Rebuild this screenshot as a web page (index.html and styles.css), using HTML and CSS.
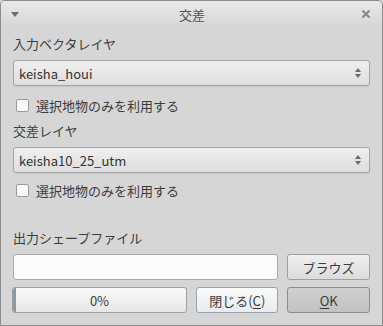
FILE: index.html
```html
<!DOCTYPE html>
<html lang="ja">
<head>
  <meta charset="UTF-8">
  <title>交差</title>
  <link rel="stylesheet" href="styles.css">
</head>
<body>
<div class="window">
  <div class="titlebar">
    <span class="menu-arrow"></span>
    <span class="title">交差</span>
    <svg class="close" width="10" height="10" viewBox="0 0 10 10"><path d="M1.5 1.5 L8.5 8.5 M8.5 1.5 L1.5 8.5" stroke="#8a8a8a" stroke-width="2.2"/></svg>
  </div>

  <div class="content">
    <div class="label first">入力ベクタレイヤ</div>
    <div class="combo"><span>keisha_houi</span><span class="spin"></span></div>
    <label class="check c1"><span class="box"></span>選択地物のみを利用する</label>

    <div class="label">交差レイヤ</div>
    <div class="combo"><span>keisha10_25_utm</span><span class="spin"></span></div>
    <label class="check"><span class="box"></span>選択地物のみを利用する</label>

    <div class="label out">出力シェープファイル</div>
    <div class="row">
      <div class="input"></div>
      <div class="btn">ブラウズ</div>
    </div>
    <div class="row">
      <div class="progress"><span class="chunk"></span>0%</div>
      <div class="btn close-btn">閉じる(<u>C</u>)</div>
      <div class="btn ok"><u>O</u>K</div>
    </div>
  </div>
</div>
</body>
</html>
```

FILE: styles.css
```css
* {
  box-sizing: border-box;
  margin: 0;
  padding: 0;
}

body {
  width: 383px;
  height: 326px;
  font-family: "Noto Sans CJK JP", "Noto Sans", sans-serif;
  font-size: 13px;
  color: #3c3c3c;
  background: #d6d6d6;
}

.window {
  width: 383px;
  height: 326px;
  border: 1px solid #8c8c8c;
  border-radius: 5px 5px 0 0;
  background: #d6d6d6;
  display: flex;
  flex-direction: column;
}

/* Pasek tytułu */
.titlebar {
  height: 26px;
  flex: none;
  display: flex;
  align-items: center;
  padding: 0 11px 0 10px;
  border-radius: 4px 4px 0 0;
  background: linear-gradient(#e9e9e9, #d6d6d6);
}

.menu-arrow {
  width: 0;
  height: 0;
  border-left: 4px solid transparent;
  border-right: 4px solid transparent;
  border-top: 5px solid #6e6e6e;
}

.title {
  flex: 1;
  text-align: center;
  font-size: 13px;
  color: #505050;
  padding-left: 4px;
}

.content {
  padding: 0 12px;
  display: flex;
  flex-direction: column;
}

.label {
  height: 20px;
  line-height: 20px;
  margin-top: 6px;
}

.label.first { margin-top: 7px; }
.label.out { margin-top: 28px; }

.combo {
  margin-top: 6px;
  height: 26px;
  border: 1px solid #a5a5a5;
  border-radius: 3px;
  background: linear-gradient(#efefef, #dedede);
  box-shadow: 0 1px 1px rgba(0,0,0,0.08);
  display: flex;
  align-items: center;
  justify-content: space-between;
  padding: 0 8px 0 5px;
  color: #333;
}

.spin {
  position: relative;
  width: 6px;
  height: 12px;
}

.spin::before, .spin::after {
  content: "";
  position: absolute;
  left: 0;
  border-left: 3px solid transparent;
  border-right: 3px solid transparent;
}

.spin::before { top: 1px; border-bottom: 4px solid #6a6a6a; }
.spin::after { bottom: 1px; border-top: 4px solid #6a6a6a; }

.check {
  display: flex;
  align-items: center;
  height: 20px;
  margin-top: 7px;
  padding-left: 3px;
}

.check.c1 { margin-top: 9px; }

.box {
  flex: none;
  width: 13px;
  height: 13px;
  border: 1px solid #9a9a9a;
  border-radius: 2px;
  background: #fbfbfb;
  margin-right: 7px;
}

.row {
  display: flex;
  gap: 9px;
  margin-top: 6px;
  height: 26px;
}

.row + .row { margin-top: 7px; }

.input {
  flex: 1;
  border: 1px solid #a8a8a8;
  border-radius: 3px;
  background: #fbfbfb;
}

.btn {
  width: 83px;
  border: 1px solid #a0a0a0;
  border-radius: 3px;
  background: linear-gradient(#f0f0f0, #dcdcdc);
  display: flex;
  align-items: center;
  justify-content: center;
  color: #3a3a3a;
}

.close-btn {
  background: linear-gradient(#fafafa, #e8ecf0);
  border-color: #9aa3ad;
}

.ok {
  background: linear-gradient(#d0d0d0, #c2c2c2);
  border-color: #8e8e8e;
}

u { text-decoration-thickness: 1px; text-underline-offset: 2px; }

.progress {
  width: 176px;
  border: 1px solid #a0a0a0;
  border-radius: 3px;
  background: linear-gradient(#fafafa, #e6e6e6);
  display: flex;
  align-items: center;
  justify-content: center;
  position: relative;
  margin-left: -1px;
}

.chunk {
  position: absolute;
  left: 0;
  top: 0;
  bottom: 0;
  width: 3px;
  background: #8a9aac;
  border-radius: 2px 0 0 2px;
}
```
